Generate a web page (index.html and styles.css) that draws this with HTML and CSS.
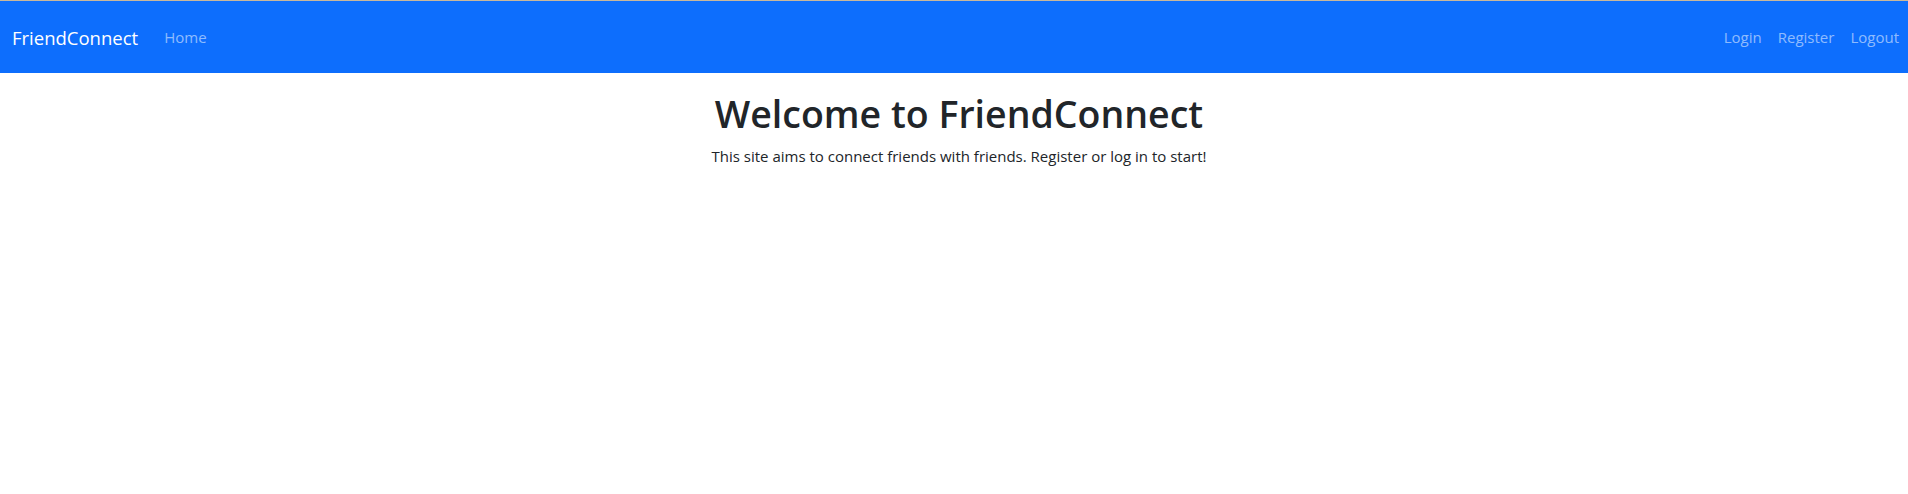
FILE: index.html
```html
<!DOCTYPE html>
<html lang="en">
<head>
<meta charset="utf-8">
<title>FriendConnect</title>
<link rel="stylesheet" href="styles.css">
</head>
<body>
<nav class="navbar">
  <div class="nav-left">
    <a class="brand" href="#">FriendConnect</a>
    <a class="nav-link" href="#">Home</a>
  </div>
  <div class="nav-right">
    <a class="nav-link" href="#">Login</a>
    <a class="nav-link" href="#">Register</a>
    <a class="nav-link" href="#">Logout</a>
  </div>
</nav>
<main class="hero">
  <h1 class="title">Welcome to FriendConnect</h1>
  <p class="lead">This site aims to connect friends with friends. Register or log in to start!</p>
</main>
</body>
</html>
```

FILE: styles.css
```css
html, body {
  margin: 0;
  padding: 0;
}
body {
  background: #fff;
  color: #212529;
  font-family: "Open Sans", "Noto Sans", sans-serif;
  font-size: 15px;
  border-top: 1px solid #c9b89c;
}
a {
  text-decoration: none;
}
.navbar {
  height: 72px;
  background: #0d6efd;
  display: flex;
  align-items: center;
  justify-content: space-between;
  padding: 0 1px 0 12px;
}
.nav-left, .nav-right {
  display: flex;
  align-items: center;
}
.brand {
  color: #fff;
  font-size: 18.5px;
  margin-right: 18px;
}
.nav-link {
  color: rgba(255, 255, 255, 0.55);
  font-size: 15px;
  padding: 8px;
}
.hero {
  text-align: center;
  padding: 18px 0 0 10px;
}
.title {
  margin: 0 0 9px;
  font-size: 37.5px;
  font-weight: 600;
  line-height: 1.2;
}
.lead {
  margin: 0;
  font-size: 15px;
  line-height: 1.5;
}
```
